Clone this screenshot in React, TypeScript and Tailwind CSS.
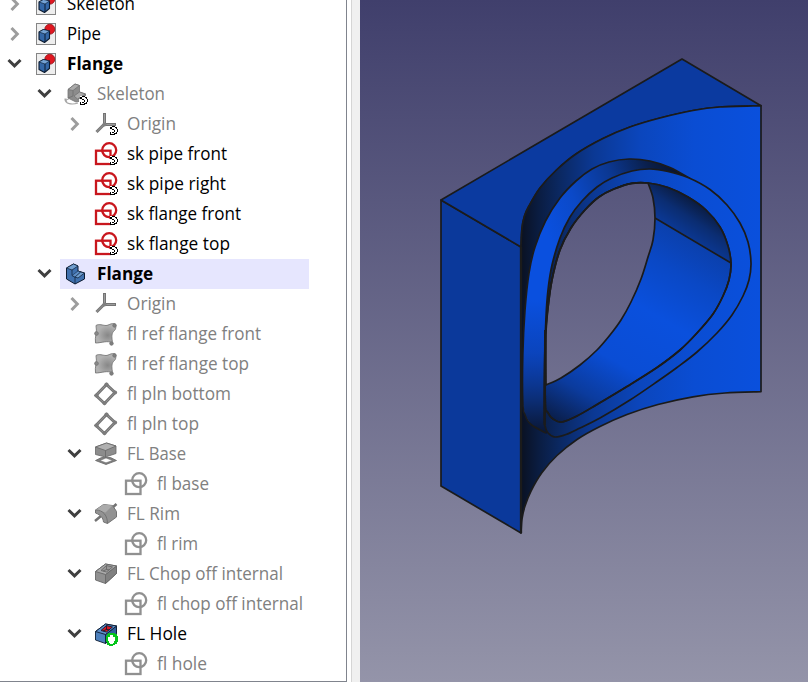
import React from "react";

type Kind =
  | "doc" | "body" | "bodyGray" | "origin" | "sketch" | "sketchRed" | "binder"
  | "plane" | "pad" | "revolve" | "pocket" | "hole";

type Row = {
  label: string;
  depth: number;
  kind: Kind;
  width: number;
  arrow?: "open" | "closed";
  tone?: "dark" | "bold";
  ext?: boolean;
  selected?: boolean;
};

const rows: Row[] = [
  { label: "Skeleton", depth: 0, kind: "doc", width: 68, arrow: "closed", tone: "dark" },
  { label: "Pipe", depth: 0, kind: "doc", width: 34, arrow: "closed", tone: "dark" },
  { label: "Flange", depth: 0, kind: "doc", width: 56, arrow: "open", tone: "bold" },
  { label: "Skeleton", depth: 1, kind: "bodyGray", width: 68, arrow: "open", ext: true },
  { label: "Origin", depth: 2, kind: "origin", width: 49, arrow: "closed", ext: true },
  { label: "sk pipe front", depth: 2, kind: "sketchRed", width: 100, tone: "dark", ext: true },
  { label: "sk pipe right", depth: 2, kind: "sketchRed", width: 99, tone: "dark", ext: true },
  { label: "sk flange front", depth: 2, kind: "sketchRed", width: 114, tone: "dark", ext: true },
  { label: "sk flange top", depth: 2, kind: "sketchRed", width: 103, tone: "dark", ext: true },
  { label: "Flange", depth: 1, kind: "body", width: 56, arrow: "open", tone: "bold", selected: true },
  { label: "Origin", depth: 2, kind: "origin", width: 49, arrow: "closed" },
  { label: "fl ref flange front", depth: 2, kind: "binder", width: 134 },
  { label: "fl ref flange top", depth: 2, kind: "binder", width: 122 },
  { label: "fl pln bottom", depth: 2, kind: "plane", width: 104 },
  { label: "fl pln top", depth: 2, kind: "plane", width: 72 },
  { label: "FL Base", depth: 2, kind: "pad", width: 59, arrow: "open" },
  { label: "fl base", depth: 3, kind: "sketch", width: 52 },
  { label: "FL Rim", depth: 2, kind: "revolve", width: 53, arrow: "open" },
  { label: "fl rim", depth: 3, kind: "sketch", width: 41 },
  { label: "FL Chop off internal", depth: 2, kind: "pocket", width: 156, arrow: "open" },
  { label: "fl chop off internal", depth: 3, kind: "sketch", width: 146 },
  { label: "FL Hole", depth: 2, kind: "hole", width: 60, arrow: "open", tone: "dark" },
  { label: "fl hole", depth: 3, kind: "sketch", width: 50 },
];

const indents = ["w-0", "w-[30px]", "w-[60px]", "w-[90px]"];

function Glyph({ kind }: { kind: Kind }) {
  switch (kind) {
    case "doc":
      return (
        <g>
          <rect x="2.5" y="1.5" width="19" height="21" fill="#eeeeee" stroke="#858585" />
          <circle cx="15.8" cy="7.2" r="5" fill="#df1720" stroke="#8e1018" strokeWidth=".8" />
          <path d="M5 10 9.5 7.5 15.5 9v7.5l-5 4L5 17.5Z" fill="#3467a7" stroke="#0b1b31" strokeLinejoin="round" strokeWidth="1.1" />
          <path d="m5 10 4.5-2.5 6 1.5-4.5 3Z" fill="#75a3d5" stroke="#0b1b31" strokeWidth=".6" />
          <path d="M11 12v8" stroke="#0b1b31" />
        </g>
      );
    case "body":
      return (
        <g stroke="#0b1b31" strokeLinejoin="round" strokeWidth="1">
          <path d="m2.5 6 7-4 4.5 2v5l6.5 2v6L11 22l-8.5-5Z" fill="#3f70ae" />
          <path d="m2.5 6 7-4 4.5 2-6 4Zm8.500 9 5.500-5 4 1-6.500 5Z" fill="#729fcf" strokeWidth=".7" />
          <path d="M8 8v5.500l3 1.500v7" fill="none" strokeWidth=".7" />
          <path d="M8 13.500 14 9l2.500 1L11 15Z" fill="#5d8dc6" strokeWidth=".5" />
        </g>
      );
    case "bodyGray":
      return (
        <g stroke="#747474" strokeLinejoin="round">
          <path d="M4 7.500 11 2l4.500 1.500v6.500l6 2v6L12 20 4 16Z" fill="#8c8c8c" strokeWidth=".8" />
          <path d="M4 7.500 11 2l4.500 1.500-6.500 5ZM10 14l5.500-4 6 2-8 5Z" fill="#ababab" strokeWidth=".8" />
          <path d="M9 8.500V14l-5 2" fill="none" />
          <path d="M1 17c0 5 7 6 13 4M3 19.500 1 17l3.500.5" fill="none" stroke="#a5a5a5" strokeWidth="1.2" />
        </g>
      );
    case "origin":
      return (
        <g>
          <path d="M10.500 12V1M10.500 12.500H22M10.500 12l-8 8" fill="none" stroke="#747474" strokeWidth="3" />
          <path d="M10.500 12V2M11 12.500h10M9.500 13l-7 7" fill="none" stroke="#a0a0a0" strokeWidth=".9" />
          <circle cx="10.500" cy="12.500" r="2" fill="#808080" />
        </g>
      );
    case "sketchRed":
      return (
        <g fill="none" stroke="#c8161d" strokeWidth="2.300">
          <rect x="2" y="8.700" width="14.500" height="13.300" />
          <circle cx="15.200" cy="8.200" r="7" />
        </g>
      );
    case "sketch":
      return (
        <g fill="none" stroke="#909090" strokeWidth="2.300">
          <rect x="2" y="8.700" width="14.500" height="13.300" />
          <circle cx="15.200" cy="8.200" r="7" />
        </g>
      );
    case "binder":
      return (
        <g stroke="#777777">
          <path d="M2 3.500C5 1.500 9 3.500 12 3.500S17 .5 21.500 2c1 5-.5 6-2 7.500-2.500 2.500-1.500 7-1 11.500-5-3-11 0-17 0C.5 15 3.500 10 2 3.500Z" fill="url(#grayLump)" strokeWidth=".9" />
          <circle cx="20.500" cy="3.500" r="1.700" fill="#808080" />
          <circle cx="2.500" cy="11.500" r="1.800" fill="#898989" />
          <circle cx="17.500" cy="21.500" r="1.700" fill="#808080" />
        </g>
      );
    case "plane":
      return (
        <g>
          <path d="m12.500 2.500 8.500 8-10.500 11-8.500-8Z" fill="none" stroke="#727272" strokeWidth="3" />
          <path d="m12.500 2.500 8.500 8-10.500 11-8.500-8Z" fill="none" stroke="#999999" strokeWidth="1" />
          <g fill="#7c7c7c"><circle cx="12.500" cy="2.500" r="2.100" /><circle cx="21" cy="10.500" r="2.100" /><circle cx="10.500" cy="21" r="2.100" /><circle cx="2.500" cy="13.500" r="2.100" /></g>
        </g>
      );
    case "pad":
      return (
        <g stroke="#676767" strokeWidth=".8" strokeLinejoin="round">
          <path d="m1.500 18.500 6-3h9l6 3-10.500 4Z" fill="#808080" />
          <path d="M6 18.500 12 16l6.500 2.500-6.500 2.300Z" fill="#ffffff" strokeWidth=".5" />
          <path d="m1.500 5 11-4 9.500 3v7.500l-10.500 3.500-10-2.500Z" fill="#8c8c8c" />
          <path d="m1.500 5 11-4 9.500 3-10.500 4.500Z" fill="#b0b0b0" />
          <path d="M11.500 8.500V15" />
        </g>
      );
    case "revolve":
      return (
        <g stroke="#737373">
          <path d="m1 19 6-5M18 6l4.500-4" strokeWidth="2.500" />
          <path d="m1.500 8 8-5.500 9 1 4 6V15l-9 6.500-4-1.500C9 16 7 13 1.500 11Z" fill="#929292" strokeLinejoin="round" />
          <path d="m1.500 8 8-5.500 9 1-7 7Z" fill="#ababab" stroke="none" />
          <path d="M1.500 8c8 0 12 6 12 13.500" fill="none" strokeWidth="1" />
        </g>
      );
    case "pocket":
    case "hole": {
      const active = kind === "hole";
      return (
        <g stroke={active ? "#0b1b31" : "#686868"} strokeLinejoin="round" strokeWidth=".9">
          <path d="m1.500 9.500 10-7.500L22.500 4v7.500L11.500 21.500l-10-3.500Z" fill={active ? "#4c80bd" : "#909090"} />
          <path d="M11.500 12.500 22.500 4v7.500l-11 10Z" fill={active ? "#2f5e9c" : "#808080"} />
          <path d="m1.500 9.500 10-7.500L22.500 4l-11 8.500Z" fill={active ? "#5d8fca" : "#aaaaaa"} />
          <path d="m7 8.500 5.500-5 6 1.500-6 5Z" fill={active ? "#d91520" : "#999999"} />
          <path d="M12.500 3.500v4l-3.500 1.500M12.500 7.500l3 .5" fill="none" />
          {active && (
            <g shapeRendering="crispEdges" stroke="none">
              <path d="M14 11h7v1h2v2h1v6h-1v2h-2v1h-2v1h-4v-1h-2v-3h-1v-6h1v-2h1Z" fill="#05c51b" />
              <path d="M16 13h3v2h2v4h-1v2h-1v1h-3v-1h-1v-2h-1v-4h2Z" fill="#ffffff" />
            </g>
          )}
        </g>
      );
    }
  }
}

function TreeIcon({ kind, ext }: { kind: Kind; ext?: boolean }) {
  return (
    <svg viewBox="0 0 24 24" className="h-6 w-6 shrink-0 overflow-visible">
      <Glyph kind={kind} />
      {ext && (
        <g shapeRendering="crispEdges">
          <path d="M16 14h6v1h1v2h1v4h-1v2h-1v1h-5v-1h-1v-2h-1v-4h1Z" fill="#ffffff" />
          <path d="M18 14h3v1h-3ZM16 15h2v2h-2ZM21 15h2v2h-1v-1h-1ZM23 17h1v3h-1ZM22 20h1v2h-1ZM20 21h2v1h-2ZM18 22h3v1h-3ZM16 20h1v2h1v1h-2ZM18 17h2v1h-2ZM20 18h1v2h-1ZM18 20h2v1h-2Z" fill="#000000" />
        </g>
      )}
    </svg>
  );
}

function TreeRow({ row }: { row: Row }) {
  const weight = row.tone === "bold" ? "font-bold text-black" : row.tone === "dark" ? "text-black" : "text-[#808080]";
  return (
    <div className="flex h-[30px] shrink-0 items-center">
      <span className={`${indents[row.depth]} shrink-0`} />
      <span className="flex w-[30px] shrink-0 items-center pl-[7px]">
        {row.arrow && (
          <svg viewBox="0 0 16 16" className="h-4 w-4" fill="none" strokeWidth="3">
            {row.arrow === "open"
              ? <path d="m1.500 4 6 5.800 6-5.800" stroke="#3f3f3f" />
              : <path d="m4.500 2 5.800 6-5.800 6" stroke="#9d9d9d" />}
          </svg>
        )}
      </span>
      <span className={`flex h-[30px] items-center pl-1 ${row.selected ? "w-[249px] bg-[#e6e6fe]" : ""}`}>
        <TreeIcon kind={row.kind} ext={row.ext} />
        <svg className={`ml-[9px] h-[30px] w-[180px] shrink-0 ${weight}`}>
          <text x="0" y="21" textLength={row.width} lengthAdjust="spacingAndGlyphs" fill="currentColor" className="font-['Open_Sans','Noto_Sans',sans-serif] text-[18.5px]">{row.label}</text>
        </svg>
      </span>
    </div>
  );
}

type Pt = [number, number];

// Catmull-Rom spline through the points, written as cubic Bézier segments.
function spline(points: Pt[], closed = false) {
  const n = points.length;
  const at = (i: number) => (closed ? points[(i + n) % n] : points[Math.max(0, Math.min(n - 1, i))]);
  let d = "";
  for (let i = 0; i < (closed ? n : n - 1); i++) {
    const [a, b, c, e] = [at(i - 1), at(i), at(i + 1), at(i + 2)];
    d += `C${b[0] + (c[0] - a[0]) / 6} ${b[1] + (c[1] - a[1]) / 6} ${c[0] - (e[0] - b[0]) / 6} ${c[1] - (e[1] - b[1]) / 6} ${c[0]} ${c[1]}`;
  }
  return d;
}

const topEdge: Pt[] = [[761, 105.7], [720, 107], [693, 110.500], [660, 118], [630, 127], [603, 138.500], [576, 154], [556, 170.500], [540, 188], [529, 206], [524.500, 216], [522, 228], [521, 247]];
const bottomEdge: Pt[] = [[521, 533], [522, 519], [525, 506], [531, 491], [542, 472.500], [557, 455.500], [577, 439.500], [600, 426.500], [627, 414.500], [658, 404.500], [693, 396.800], [725, 393], [761, 391.700]];
const rimBack: Pt[] = [[546, 433], [531, 424.500], [525, 415], [522.800, 403], [522.800, 355], [525, 310], [529, 273], [535, 247], [545.500, 221], [560, 198], [576, 181], [592, 169], [609, 162], [629, 159], [650, 161], [670, 167.500], [690, 178.500]];
const rimFront: Pt[] = [[544.500, 367], [546, 317], [548, 290], [552, 265], [560, 238], [570, 217], [582, 201], [597, 187], [612, 178], [632, 171], [650, 169], [668, 171.500], [688, 177.500], [710, 189.500], [727, 205], [740, 223], [748, 242], [751, 263], [749, 280], [743, 296], [732, 315], [717, 333], [697, 352], [677, 367.500], [658, 381], [630, 400], [600, 418], [580, 428], [566, 434.500], [555, 437], [548, 433], [545, 426], [544.300, 417]];
const boreEdge: Pt[] = [[545.300, 403], [545.700, 335], [548, 308], [552, 280], [560, 250], [571, 228], [585, 210], [599, 197], [614, 189], [632, 183.300], [648, 183], [668, 187.500], [688, 197], [706, 210], [720, 227], [728, 246], [731, 264], [729, 280], [723, 296], [713, 314], [697, 333], [680, 350], [657, 367.500], [627, 386.500], [597, 404.500], [577, 416], [562, 422], [553, 419], [547.500, 412]];
const farEdge: Pt[] = [[648, 183], [653, 198], [655, 218], [653, 240], [648, 257], [641, 279], [631, 302], [621, 320], [610, 335], [597, 350], [580, 365], [561, 378], [546, 385]];
const nearEdge: Pt[] = boreEdge.slice(1, 11);

const M = (p: Pt) => `M${p[0]} ${p[1]}`;
const FACE = `${M(topEdge[0])}${spline(topEdge)}V533${spline(bottomEdge)}Z`;
const TOP = `M441 200 682 59 761 105.700${spline(topEdge)}Z`;
const RIM_SIDE = `${M(rimBack[0])}${spline(rimBack)}`;
const RIM_FACE = `${M(rimFront[0])}${spline(rimFront, true)}Z`;
const BORE = `${M(boreEdge[0])}${spline(boreEdge, true)}Z`;
const OPENING = `${M(farEdge[0])}${spline(farEdge)}L545.700 335${spline(nearEdge)}Z`;

function Model() {
  return (
    <svg viewBox="360 0 448 682" className="h-[682px] w-[448px] shrink-0">
      <defs>
        <radialGradient id="grayLump" cx=".6" cy=".6"><stop stopColor="#878787" /><stop offset="1" stopColor="#b2b2b2" /></radialGradient>
        <linearGradient id="sky" gradientUnits="userSpaceOnUse" x1="0" y1="0" x2="0" y2="682"><stop stopColor="#403f6c" /><stop offset="1" stopColor="#9494a9" /></linearGradient>
        <linearGradient id="face" gradientUnits="userSpaceOnUse" x1="521" y1="0" x2="761" y2="0">
          <stop stopColor="#0a1122" /><stop offset=".07" stopColor="#0a1c40" /><stop offset=".16" stopColor="#0b2861" /><stop offset=".3" stopColor="#0b3893" /><stop offset=".5" stopColor="#0b46bd" /><stop offset=".72" stopColor="#0a4dd3" /><stop offset="1" stopColor="#0a50dd" />
        </linearGradient>
        <linearGradient id="side" gradientUnits="userSpaceOnUse" x1="548" y1="235" x2="686" y2="180">
          <stop stopColor="#0a50df" /><stop offset=".25" stopColor="#0b49c8" /><stop offset=".55" stopColor="#0b3790" /><stop offset=".8" stopColor="#0a1f4b" /><stop offset="1" stopColor="#0a1225" />
        </linearGradient>
        <linearGradient id="sideDown" x1="0" y1="300" x2="0" y2="432" gradientUnits="userSpaceOnUse"><stop stopColor="#0a3fae" stopOpacity="0" /><stop offset=".4" stopColor="#0b3fae" stopOpacity=".7" /><stop offset=".75" stopColor="#0b2e77" /><stop offset="1" stopColor="#0a1735" /></linearGradient>
        <linearGradient id="boreLow" gradientUnits="userSpaceOnUse" x1="700" y1="230" x2="580" y2="438">
          <stop stopColor="#0b3da4" /><stop offset=".2" stopColor="#0a48c5" /><stop offset=".4" stopColor="#0a50dd" /><stop offset=".65" stopColor="#0a4dd5" /><stop offset=".83" stopColor="#0b3b9d" /><stop offset="1" stopColor="#0a1c44" />
        </linearGradient>
        <linearGradient id="boreTop" gradientUnits="userSpaceOnUse" x1="673" y1="236" x2="700" y2="195"><stop stopColor="#0b3ca0" /><stop offset=".5" stopColor="#0b2d72" /><stop offset="1" stopColor="#0a142b" /></linearGradient>
        <clipPath id="boreClip"><path d={BORE} /></clipPath>
      </defs>
      <path d="M360 0h448v682H360Z" fill="url(#sky)" />
      <g stroke="#1b1b1b" strokeWidth="1.700" strokeLinejoin="round">
        <path d="M441 200 521 247V533L441 486Z" fill="#0b399b" />
        <path d={TOP} fill="#0b3aa0" />
        <path d={FACE} fill="url(#face)" />
        <path d={RIM_SIDE} fill="url(#side)" stroke="none" />
        <path d="M547 434 531 424.500 525 415 522.800 403V355L525.300 300H547Z" fill="url(#sideDown)" stroke="none" />
        <path d={RIM_SIDE} fill="none" />
        <path d={RIM_FACE} fill="url(#face)" />
        <path d={BORE} fill="url(#boreLow)" />
        <g clipPath="url(#boreClip)"><path d="M645 180h90v85.400L655 218Z" fill="url(#boreTop)" stroke="none" /></g>
        <path d="M655 218 731 263" />
        <path d={OPENING} fill="url(#sky)" />
        <path d={BORE} fill="none" />
        <path d="M521 247V533M545.200 330 544.700 425" fill="none" strokeWidth="2.300" />
      </g>
    </svg>
  );
}

export default function App() {
  return (
    <main className="flex h-[682px] w-[808px] overflow-hidden bg-[#f0f0f0]">
      <section className="h-[682px] w-[347px] shrink-0 overflow-hidden border-r border-b border-[#80848d] bg-white">
        <div className="-mt-[11px] flex flex-col">
          {rows.map((row, i) => <TreeRow key={i} row={row} />)}
        </div>
      </section>
      <div className="w-1 shrink-0 bg-white" />
      <div className="w-[9px] shrink-0 border-l border-[#d5d5d5] bg-[#f0f0f0]" />
      <Model />
    </main>
  );
}
